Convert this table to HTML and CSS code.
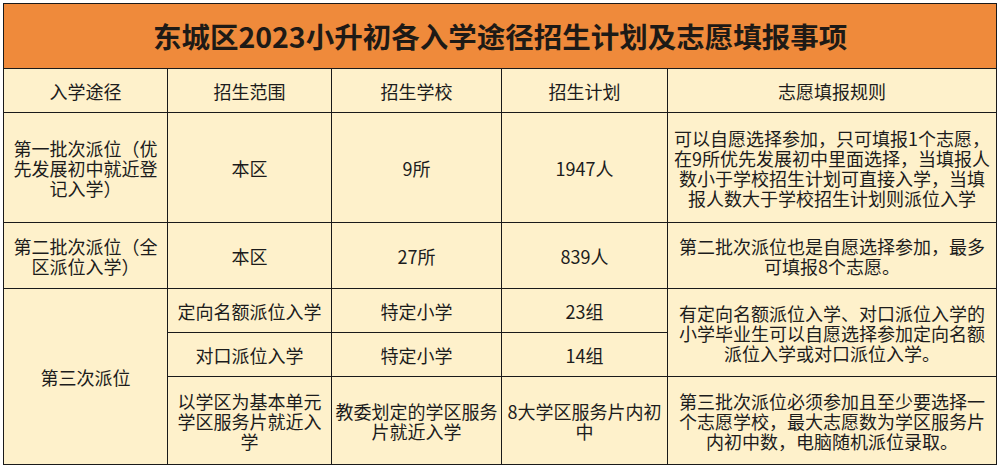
FILE: index.html
```html
<!DOCTYPE html>
<html lang="zh-CN">
<head>
<meta charset="utf-8">
<title>东城区2023小升初各入学途径招生计划及志愿填报事项</title>
<link rel="stylesheet" href="styles.css">
</head>
<body>
<table class="plan">
  <colgroup>
    <col class="c1"><col class="c2"><col class="c3"><col class="c4"><col class="c5">
  </colgroup>
  <tr class="r-title"><th colspan="5" class="title">东城区2023小升初各入学途径招生计划及志愿填报事项</th></tr>
  <tr class="r-head">
    <td>入学途径</td><td>招生范围</td><td>招生学校</td><td>招生计划</td><td>志愿填报规则</td>
  </tr>
  <tr class="r-1">
    <td>第一批次派位（优先发展初中就近登记入学）</td>
    <td>本区</td>
    <td>9所</td>
    <td>1947人</td>
    <td>可以自愿选择参加，只可填报1个志愿，在9所优先发展初中里面选择，当填报人数小于学校招生计划可直接入学，当填报人数大于学校招生计划则派位入学</td>
  </tr>
  <tr class="r-2">
    <td>第二批次派位（全区派位入学）</td>
    <td>本区</td>
    <td>27所</td>
    <td>839人</td>
    <td>第二批次派位也是自愿选择参加，最多可填报8个志愿。</td>
  </tr>
  <tr class="r-3a">
    <td rowspan="3">第三次派位</td>
    <td>定向名额派位入学</td>
    <td>特定小学</td>
    <td>23组</td>
    <td rowspan="2">有定向名额派位入学、对口派位入学的小学毕业生可以自愿选择参加定向名额派位入学或对口派位入学。</td>
  </tr>
  <tr class="r-3b">
    <td>对口派位入学</td>
    <td>特定小学</td>
    <td>14组</td>
  </tr>
  <tr class="r-3c">
    <td>以学区为基本单元学区服务片就近入学</td>
    <td class="tight">教委划定的学区服务片就近入学</td>
    <td>8大学区服务片内初中</td>
    <td>第三批次派位必须参加且至少要选择一个志愿学校，最大志愿数为学区服务片内初中数，电脑随机派位录取。</td>
  </tr>
</table>
</body>
</html>
```

FILE: styles.css
```css
html, body {
  margin: 0;
  padding: 0;
  background: #ffffff;
}
body {
  padding: 3px 0 0 3px;
  font-family: "Noto Sans CJK SC", "Noto Sans", sans-serif;
  color: #1c1c1c;
}
.plan {
  border-collapse: collapse;
  table-layout: fixed;
  width: 993px;
}
.c1 { width: 164px; }
.c2 { width: 164px; }
.c3 { width: 170px; }
.c4 { width: 166px; }
.c5 { width: 329px; }
.plan td, .plan th {
  border: 1.5px solid #1a1a1a;
  background: #fef1cb;
  text-align: center;
  vertical-align: middle;
  font-size: 18px;
  line-height: 20px;
  padding: 0 4px;
  font-weight: 400;
}
.plan td.tight {
  padding: 0 1px;
}
.plan th.title {
  background: #ef8a3b;
  font-size: 28.5px;
  font-weight: 700;
  line-height: 34px;
  color: #1e1a16;
}
.r-title { height: 65px; }
.r-head { height: 44px; }
.r-1 { height: 110px; }
.r-2 { height: 66px; }
.r-3a { height: 44px; }
.r-3b { height: 44px; }
.r-3c { height: 88px; }
```
